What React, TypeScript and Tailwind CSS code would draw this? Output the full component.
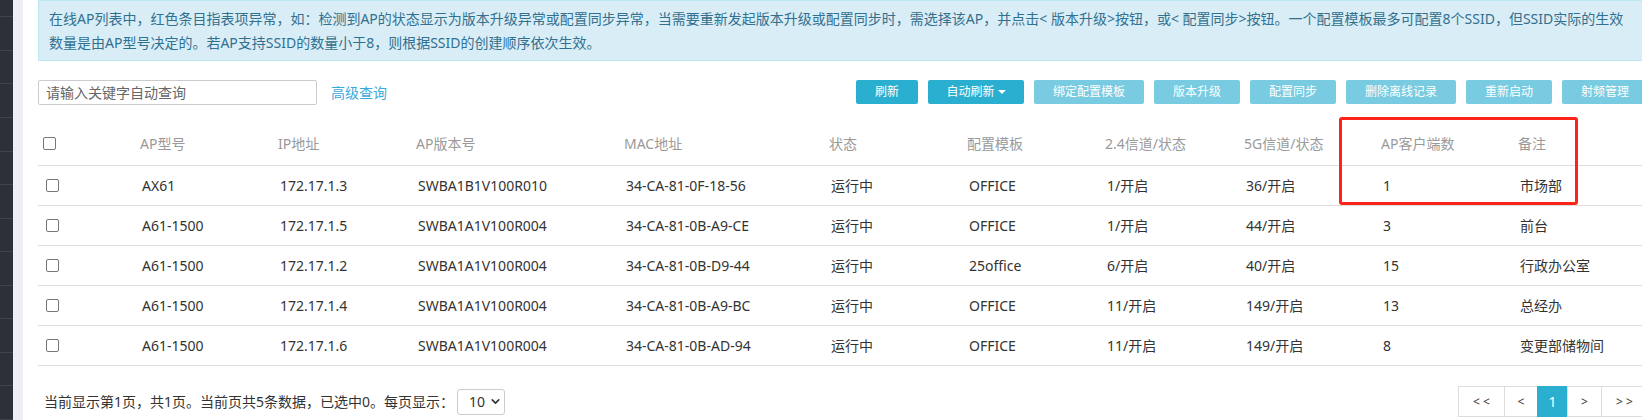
import { ChevronDown } from "lucide-react";

const rows = [
  ["AX61", "172.17.1.3", "SWBA1B1V100R010", "34-CA-81-0F-18-56", "运行中", "OFFICE", "1/开启", "36/开启", "1", "市场部"],
  ["A61-1500", "172.17.1.5", "SWBA1A1V100R004", "34-CA-81-0B-A9-CE", "运行中", "OFFICE", "1/开启", "44/开启", "3", "前台"],
  ["A61-1500", "172.17.1.2", "SWBA1A1V100R004", "34-CA-81-0B-D9-44", "运行中", "25office", "6/开启", "40/开启", "15", "行政办公室"],
  ["A61-1500", "172.17.1.4", "SWBA1A1V100R004", "34-CA-81-0B-A9-BC", "运行中", "OFFICE", "11/开启", "149/开启", "13", "总经办"],
  ["A61-1500", "172.17.1.6", "SWBA1A1V100R004", "34-CA-81-0B-AD-94", "运行中", "OFFICE", "11/开启", "149/开启", "8", "变更部储物间"],
];

const headers = ["AP型号", "IP地址", "AP版本号", "MAC地址", "状态", "配置模板", "2.4信道/状态", "5G信道/状态", "AP客户端数", "备注"];

const cols =
  "grid grid-cols-[92px_138px_138px_208px_205px_138px_138px_139px_137px_137px_140px]";

function Checkbox() {
  return <span className="block w-[13px] h-[13px] rounded-[2px] border border-[#767676] bg-white" />;
}

function Sidebar() {
  return (
    <div className="w-[13px] shrink-0 bg-[#2d3038] flex flex-col">
      <div className="h-[18px] border-b border-[#40434b]" />
      {Array.from({ length: 12 }).map((_, i) => (
        <div key={i} className="h-[35px] border-b border-[#40434b]" />
      ))}
    </div>
  );
}

export default function App() {
  return (
    <div className="flex w-[1642px] h-[420px] overflow-hidden bg-white font-['Noto_Sans','Noto_Sans_CJK_SC',sans-serif] text-[14px] text-[#333]">
      <Sidebar />
      <div className="w-[10px] shrink-0 bg-[#eeeef7]" />
      <div className="pl-[15px] shrink-0">
        <div className="w-[1610px]">
          {/* notice */}
          <div className="bg-[#d9edf7] border border-[#bce8f1] text-[#31708f] pl-[10px] pt-[6px] pb-[5px] leading-[24px] overflow-hidden">
            <div className="whitespace-nowrap">
              在线AP列表中，红色条目指表项异常，如：检测到AP的状态显示为版本升级异常或配置同步异常，当需要重新发起版本升级或配置同步时，需选择该AP，并点击&lt; 版本升级&gt;按钮，或&lt; 配置同步&gt;按钮。一个配置模板最多可配置8个SSID，但SSID实际的生效
            </div>
            <div className="whitespace-nowrap">数量是由AP型号决定的。若AP支持SSID的数量小于8，则根据SSID的创建顺序依次生效。</div>
          </div>

          {/* toolbar */}
          <div className="mt-[19px] flex items-start justify-between">
            <div className="flex items-center">
              <div className="w-[279px] h-[25px] border border-[#ccc] rounded-[2px] pl-[7px] flex items-center text-[#666]">
                请输入关键字自动查询
              </div>
              <span className="ml-[14px] text-[#3aa9dc]">高级查询</span>
            </div>
            <div className="flex gap-[10px] text-[12px] text-white">
              <button className="w-[62px] h-[24px] rounded-[2px] bg-[#2bafd1]">刷新</button>
              <button className="w-[96px] h-[24px] rounded-[2px] bg-[#2bafd1] flex items-center justify-center">
                自动刷新
                <span className="ml-[3px] w-0 h-0 border-l-[4px] border-r-[4px] border-t-[4px] border-l-transparent border-r-transparent border-t-white" />
              </button>
              <button className="w-[110px] h-[24px] rounded-[2px] bg-[#78cbe1]">绑定配置模板</button>
              <button className="w-[86px] h-[24px] rounded-[2px] bg-[#78cbe1]">版本升级</button>
              <button className="w-[86px] h-[24px] rounded-[2px] bg-[#78cbe1]">配置同步</button>
              <button className="w-[110px] h-[24px] rounded-[2px] bg-[#78cbe1]">删除离线记录</button>
              <button className="w-[86px] h-[24px] rounded-[2px] bg-[#78cbe1]">重新启动</button>
              <button className="w-[86px] h-[24px] rounded-[2px] bg-[#78cbe1]">射频管理</button>
            </div>
          </div>

          {/* table */}
          <div className="relative mt-[17px]">
            <div className={`${cols} h-[44px] items-center border-b border-[#ddd] text-[#9a9a9a]`}>
              <div className="pl-[5px]">
                <Checkbox />
              </div>
              {headers.map((h) => (
                <div key={h} className="pl-[10px] whitespace-nowrap">
                  {h}
                </div>
              ))}
            </div>
            {rows.map((r, i) => (
              <div key={i} className={`${cols} h-[40px] items-center border-b border-[#ddd]`}>
                <div className="pl-[8px]">
                  <Checkbox />
                </div>
                {r.map((c, j) => (
                  <div key={j} className="pl-[12px] whitespace-nowrap">
                    {c}
                  </div>
                ))}
              </div>
            ))}
            <div className="absolute left-[1301px] top-[-5px] w-[239px] h-[88px] border-[3px] border-[#ff2318] rounded-[3px]" />
          </div>

          {/* pagination */}
          <div className="mt-[20px] flex items-center justify-between h-[31px]">
            <div className="flex items-center pl-[6px]">
              <span>当前显示第1页，共1页。当前页共5条数据，已选中0。每页显示：</span>
              <div className="ml-[3px] w-[48px] h-[26px] border border-[#ccc] rounded-[3px] flex items-center pl-[11px] gap-[4px]">
                <span>10</span>
                <ChevronDown size={13} strokeWidth={3} />
              </div>
            </div>
            <div className="flex text-[12px] h-[31px]">
              <div className="w-[47px] border border-[#ddd] flex items-center justify-center">&lt; &lt;</div>
              <div className="w-[34px] -ml-px border border-[#ddd] flex items-center justify-center">&lt;</div>
              <div className="w-[31px] -ml-px border border-[#2bafd1] bg-[#2bafd1] text-white text-[14px] flex items-center justify-center">1</div>
              <div className="w-[35px] -ml-px border border-[#ddd] flex items-center justify-center">&gt;</div>
              <div className="w-[47px] -ml-px border border-[#ddd] flex items-center justify-center">&gt; &gt;</div>
            </div>
          </div>
        </div>
      </div>
    </div>
  );
}
